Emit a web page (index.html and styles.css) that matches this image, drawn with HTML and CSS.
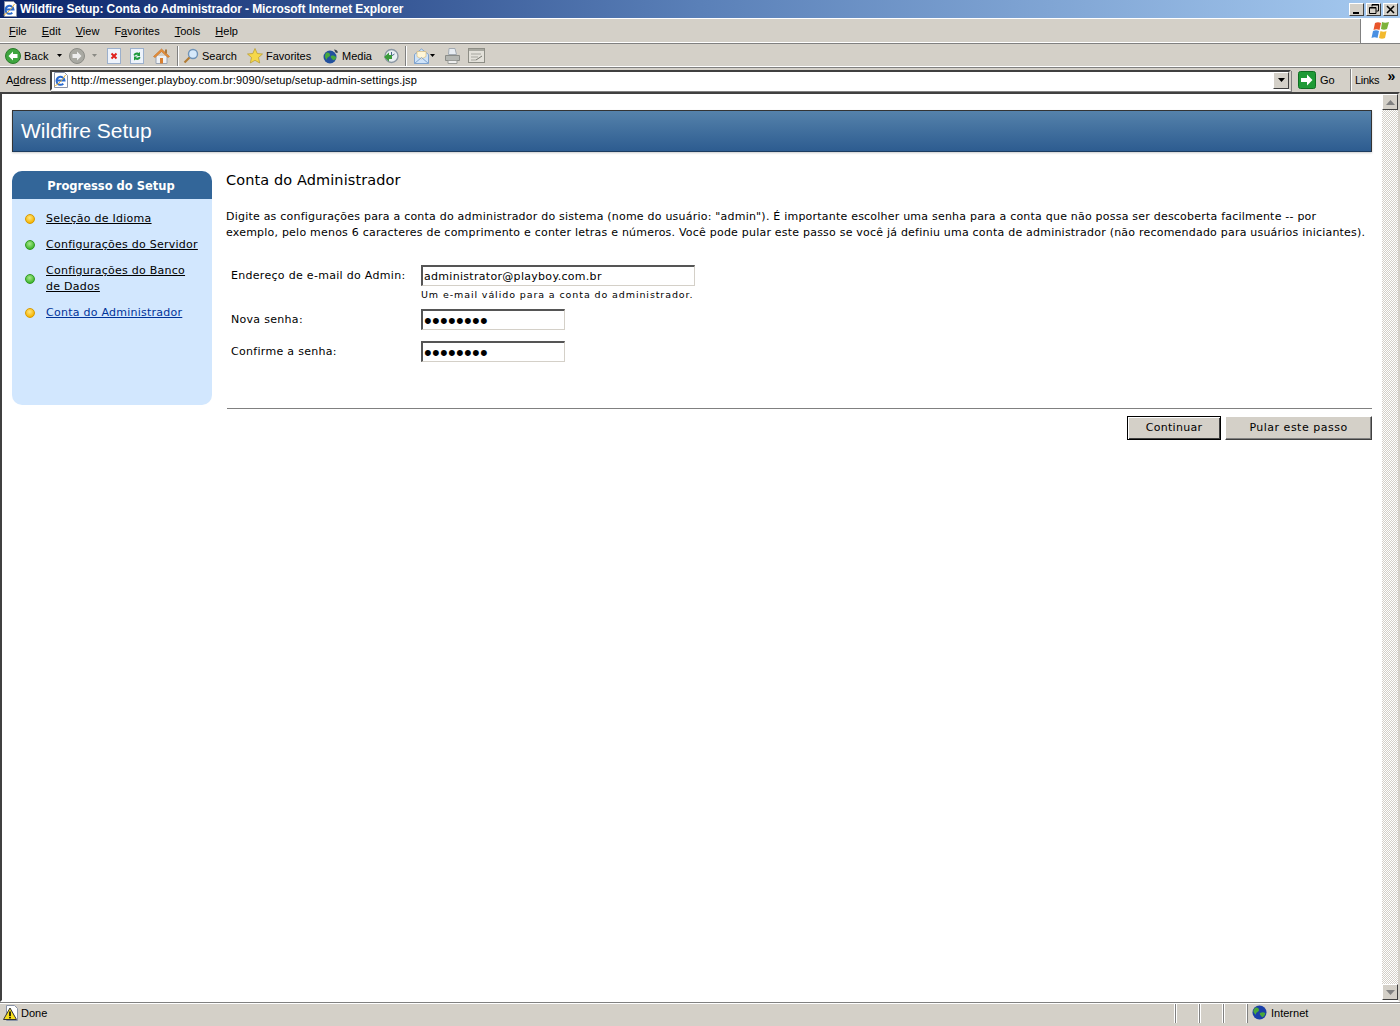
FILE: index.html
```html
<!DOCTYPE html>
<html lang="pt">
<head>
<meta charset="utf-8">
<title>Wildfire Setup: Conta do Administrador - Microsoft Internet Explorer</title>
<link rel="stylesheet" href="styles.css">
</head>
<body>
<div class="window">
  <div class="titlebar">
    <svg class="title-icon" width="16" height="16" viewBox="0 0 16 16"><path d="M2.500.5h9l3 3v12h-12z" fill="#fff" stroke="#8a93a8"/><path d="M4 8.500h7.500a4 4 0 1 0-1.200 3.200" fill="none" stroke="#2a6bd0" stroke-width="2"/><path d="M1.500 14c3-1 8-6 11-11" stroke="#e8b030" fill="none"/></svg>
    <span class="title-text">Wildfire Setup: Conta do Administrador - Microsoft Internet Explorer</span>
    <div class="win-buttons">
      <span class="win-btn"><svg width="9" height="9" viewBox="0 0 9 9"><rect x="1" y="7" width="6" height="2" fill="#000"/></svg></span>
      <span class="win-btn"><svg width="10" height="10" viewBox="0 0 10 10"><path d="M3 .5h6.500v6.500H7.500M3 .5V2.500M.5 3.500h6.500V9.500H.5z" fill="none" stroke="#000"/><path d="M3 1h7M1 4h6" stroke="#000"/></svg></span>
      <span class="win-btn"><svg width="9" height="9" viewBox="0 0 9 9"><path d="M1 1l7 7M8 1L1 8" stroke="#000" stroke-width="1.600"/></svg></span>
    </div>
  </div>

  <div class="menubar">
    <nav class="menu">
      <span><u>F</u>ile</span><span><u>E</u>dit</span><span><u>V</u>iew</span><span>F<u>a</u>vorites</span><span><u>T</u>ools</span><span><u>H</u>elp</span>
    </nav>
    <div class="logo-box">
      <svg width="22" height="19" viewBox="0 0 22 19">
        <path d="M5 2c2-1 4-1 6 0l-1.500 7c-2-1-4-1-6 0z" fill="#e8552a"/>
        <path d="M12 1c2 1 4 1 7 0l-2 7c-2 1-4 1-6 0z" fill="#7db33a"/>
        <path d="M3 10c2-1 4-1 6 0l-1.500 7c-2-1-4-1-6 0z" fill="#4a90e2"/>
        <path d="M10.500 10c2 1 4 1 6 0L15 17c-2 1-4 1-6 0z" fill="#f2b92e"/>
      </svg>
    </div>
  </div>

  <div class="toolbar">
    <span class="tool back-tool">
      <svg width="16" height="16" viewBox="0 0 16 16"><circle cx="8" cy="8" r="7.500" fill="#3ea53e" stroke="#2b7a2b"/><path d="M8 3.500L3.500 8 8 12.500V10h4.500V6H8z" fill="#fff"/></svg>
      <span>Back</span>
      <svg class="caret" width="5" height="3" viewBox="0 0 5 3"><path d="M0 0h5L2.500 3z" fill="#000"/></svg>
    </span>
    <span class="tool forward-tool">
      <svg width="16" height="16" viewBox="0 0 16 16"><circle cx="8" cy="8" r="7.500" fill="#a9a9a2" stroke="#8c8c86"/><path d="M8 3.500L12.500 8 8 12.500V10H3.500V6H8z" fill="#eee"/></svg>
      <svg class="caret" width="5" height="3" viewBox="0 0 5 3"><path d="M0 0h5L2.500 3z" fill="#8a8a84"/></svg>
    </span>
    <span class="tool doc-tool">
      <svg width="14" height="16" viewBox="0 0 14 16"><rect x=".5" y=".5" width="13" height="15" fill="#eef3fb" stroke="#9cb0cc"/><path d="M4.500 5.500l5 5M9.500 5.500l-5 5" stroke="#e0201c" stroke-width="2"/></svg>
    </span>
    <span class="tool doc-tool">
      <svg width="14" height="16" viewBox="0 0 14 16"><rect x=".5" y=".5" width="13" height="15" fill="#eef3fb" stroke="#9cb0cc"/><path d="M3.500 7c.5-2 3-3 5-2l1.500-1v4H6.500L8 7c-1.500-.5-3 0-3 1zM10.500 9.500c-.5 2-3 3-5 2L4 12.500V8.500h3.500L6 9.500c1.500.5 3 0 3-1z" fill="#1f9a3c"/></svg>
    </span>
    <span class="tool home-tool">
      <svg width="17" height="16" viewBox="0 0 17 16"><path d="M3 8v7.500h11V8" fill="#eef1f6" stroke="#9aa4b4"/><path d="M.5 8.500L8.500 1l8 7.500-1.500 1-6.500-6-6.500 6z" fill="#e8903a" stroke="#c06a20" stroke-width=".6"/><rect x="7" y="10" width="3" height="5.500" fill="#d87f30"/><rect x="12" y="1.500" width="2" height="4" fill="#a9783f"/></svg>
    </span>
    <span class="tool-sep"></span>
    <span class="tool search-tool">
      <svg width="16" height="16" viewBox="0 0 16 16"><circle cx="10" cy="6" r="4.500" fill="#d6e9fb" stroke="#6f93b8" stroke-width="1.400"/><path d="M6.500 9.500L1.500 14.500" stroke="#b27b33" stroke-width="2.200"/></svg>
      <span>Search</span>
    </span>
    <span class="tool fav-tool">
      <svg width="16" height="16" viewBox="0 0 16 16"><path d="M8 .5l2.200 5 5.300.5-4 3.500 1.200 5.500L8 12.300 3.300 15l1.200-5.500-4-3.500 5.300-.5z" fill="#f6d84a" stroke="#b89a2a" stroke-width=".7"/></svg>
      <span>Favorites</span>
    </span>
    <span class="tool media-tool">
      <svg width="16" height="16" viewBox="0 0 16 16"><circle cx="7" cy="9" r="6.500" fill="#22509e"/><path d="M3 5c2-1 4 0 4 2s-3 2-3 4-2-1-2-2 0-3 1-4zM8 8c2-1 4 0 5 1s-2 4-3 3-3-3-2-4z" fill="#46a83e"/><path d="M11 1.500c2 0 3.500 1 4 3l-2 .5-1-1.500z" fill="#39424f"/></svg>
      <span>Media</span>
    </span>
    <span class="tool history-tool">
      <svg width="16" height="16" viewBox="0 0 16 16"><circle cx="8.500" cy="8" r="6.500" fill="#e9eef2" stroke="#8b97a3" stroke-width="1.400"/><path d="M8.500 4v4l3-2" stroke="#4c6a8a" fill="none"/><path d="M6 4.500L1 9l5 4.500V11h3V7H6z" fill="#3a9a3a"/></svg>
    </span>
    <span class="tool-sep second"></span>
    <span class="tool mail-tool">
      <svg width="15" height="16" viewBox="0 0 15 16"><path d="M.5 6.500L7.500 1l7 5.500v9H.5z" fill="#cfe3f9" stroke="#7fa3cf"/><path d="M3 3.500h9v5L7.500 11 3 8.500z" fill="#fff6d8" stroke="#d9b66a" stroke-width=".6"/><path d="M.5 15.500l7-6 7 6" fill="none" stroke="#7fa3cf"/></svg>
      <svg class="caret" width="5" height="3" viewBox="0 0 5 3"><path d="M0 0h5L2.500 3z" fill="#000"/></svg>
    </span>
    <span class="tool print-tool">
      <svg width="15" height="16" viewBox="0 0 15 16"><path d="M4 .5h6l1.500 6h-8z" fill="#e8edf3" stroke="#a3aab2"/><path d="M.5 7.500h14v5H.5z" fill="#b4b6b2" stroke="#8a8c88"/><path d="M3 12.500h9v3H3z" fill="#eee" stroke="#9a9c98"/></svg>
    </span>
    <span class="tool edit-tool">
      <svg width="17" height="15" viewBox="0 0 17 15"><rect x=".5" y=".5" width="16" height="14" fill="#e3e1da" stroke="#8e8e86"/><rect x="1" y="1" width="15" height="2" fill="#a8a8a0"/><path d="M3 6h10M3 9h7M3 12h5" stroke="#a5a59e"/><path d="M8 12l6-4" stroke="#77776f"/></svg>
    </span>
  </div>

  <div class="addressbar">
    <span class="addr-label">A<u>d</u>dress</span>
    <div class="addr-field">
      <svg width="16" height="16" viewBox="0 0 16 16"><path d="M1.500.5h10l3 3v12h-13z" fill="#fff" stroke="#8a93a8"/><path d="M4 8.500h7.500a4 4 0 1 0-1.200 3.200" fill="none" stroke="#2a6bd0" stroke-width="2"/><path d="M1.500 14c3-1 8-6 11-11" stroke="#e8b030" fill="none"/></svg>
      <span class="addr-url">http://messenger.playboy.com.br:9090/setup/setup-admin-settings.jsp</span>
      <span class="addr-drop"><svg width="7" height="4" viewBox="0 0 7 4"><path d="M0 0h7L3.500 4z" fill="#000"/></svg></span>
    </div>
    <span class="go">
      <svg width="18" height="18" viewBox="0 0 18 18"><rect x=".5" y=".5" width="17" height="17" rx="2" fill="#1e9a36" stroke="#0f6e22"/><path d="M9 3.500L14.500 9 9 14.500V11H3V7h6z" fill="#fff"/></svg>
      <span>Go</span>
    </span>
    <span class="links">Links<span class="chev">»</span></span>
  </div>

  <div class="viewport">
    <main class="page">
      <header class="banner">Wildfire Setup</header>
      <div class="columns">
        <aside class="sidebar">
          <h2 class="side-title">Progresso do Setup</h2>
          <ul class="steps">
            <li class="step"><i class="dot amber"></i><a href="#">Seleção de Idioma</a></li>
            <li class="step"><i class="dot green"></i><a href="#">Configurações do Servidor</a></li>
            <li class="step"><i class="dot green"></i><a href="#">Configurações do Banco de Dados</a></li>
            <li class="step"><i class="dot amber"></i><a href="#" class="current">Conta do Administrador</a></li>
          </ul>
        </aside>
        <section class="content">
          <h1 class="heading">Conta do Administrador</h1>
          <p class="intro">Digite as configurações para a conta do administrador do sistema (nome do usuário: "admin"). É importante escolher uma senha para a conta que não possa ser descoberta facilmente -- por exemplo, pelo menos 6 caracteres de comprimento e conter letras e números. Você pode pular este passo se você já definiu uma conta de administrador (não recomendado para usuários iniciantes).</p>
          <form class="form">
            <div class="row email-row">
              <label class="label" for="email">Endereço de e-mail do Admin:</label>
              <div class="control">
                <input class="input wide" id="email" type="text" value="administrator@playboy.com.br">
                <div class="hint">Um e-mail válido para a conta do administrador.</div>
              </div>
            </div>
            <div class="row">
              <label class="label" for="p1">Nova senha:</label>
              <input class="input pass" id="p1" type="password" value="12345678">
            </div>
            <div class="row">
              <label class="label" for="p2">Confirme a senha:</label>
              <input class="input pass" id="p2" type="password" value="12345678">
            </div>
            <div class="actions">
              <button class="btn default" type="button">Continuar</button>
              <button class="btn skip" type="button">Pular este passo</button>
            </div>
          </form>
        </section>
      </div>
    </main>
    <div class="scrollbar">
      <span class="sb-btn"><svg width="9" height="5" viewBox="0 0 9 5"><path d="M4.500 0L9 5H0z" fill="#808080"/></svg></span>
      <span class="sb-track"></span>
      <span class="sb-btn"><svg width="9" height="5" viewBox="0 0 9 5"><path d="M0 0h9L4.500 5z" fill="#808080"/></svg></span>
    </div>
  </div>

  <footer class="status">
    <svg class="status-icon" width="16" height="16" viewBox="0 0 16 16"><path d="M3.500.5h8l3 3v12h-11z" fill="#fff" stroke="#8a93a8"/><path d="M7 3L.5 14.500h13z" fill="#f7df1e" stroke="#333"/><rect x="6.200" y="6.500" width="1.600" height="4.500"/><rect x="6.200" y="11.800" width="1.600" height="1.600"/></svg>
    <span class="status-text">Done</span>
    <span class="cell"></span><span class="cell"></span><span class="cell"></span>
    <span class="zone">
      <svg width="15" height="15" viewBox="0 0 15 15"><circle cx="7.500" cy="7.500" r="7" fill="#1a3fa8"/><path d="M3 3c2-1 4 0 4 2S4 7 4 9 2 8 1.500 7s.5-3 1.500-4zM8 8c2-1 4-1 5 0s-2 5-3 4-3-3-2-4z" fill="#4aa83a"/></svg>
      <span>Internet</span>
    </span>
  </footer>
</div>
</body>
</html>
```

FILE: styles.css
```css
* { box-sizing: border-box; }
html, body { margin: 0; height: 100%; overflow: hidden; }
body { font-family: "Liberation Sans", Arial, sans-serif; font-size: 11px; color: #000; background: #d4d0c8; }

.window { height: 1026px; display: flex; flex-direction: column; }

.titlebar { height: 18px; flex: none; display: flex; align-items: center; padding-left: 2px; background: linear-gradient(to right, #0a246a, #5a80b8 50%, #a6caf0); }
.title-icon { flex: none; }
.title-text { margin-left: 2px; color: #fff; font-weight: bold; font-size: 12px; letter-spacing: -.08px; white-space: nowrap; }
.win-buttons { margin-left: auto; display: flex; gap: 2px; padding-right: 2px; }
.win-btn { width: 15px; height: 13px; background: #d4d0c8; border: 1px solid; border-color: #fff #404040 #404040 #fff; display: flex; align-items: center; justify-content: center; }

.menubar { height: 26px; flex: none; display: flex; border-top: 1px solid #fff; border-bottom: 1px solid #808080; box-shadow: inset 0 -1px 0 #fff; }
.menu { display: flex; flex: 1; align-items: center; padding-left: 9px; gap: 15px; font-size: 11px; }
.logo-box { width: 40px; background: #fff; border-left: 1px solid #808080; display: flex; align-items: center; justify-content: center; margin-left: auto; padding-bottom: 2px; }

.toolbar { height: 24px; flex: none; display: flex; align-items: center; padding-left: 5px; border-bottom: 1px solid #808080; box-shadow: inset 0 -1px 0 #fff; font-size: 11px; }
.tool { display: flex; align-items: center; flex: none; }
.caret { margin-left: 5px; }
.back-tool { width: 64px; gap: 3px; }
.back-tool .caret { margin-left: 6px; }
.forward-tool { width: 38px; gap: 0; }
.forward-tool .caret { margin-left: 7px; }
.doc-tool { width: 23px; }
.home-tool { width: 24px; }
.tool-sep { width: 1px; height: 20px; background: #808080; box-shadow: 1px 0 0 #fff; margin: 0 5px 0 0; flex: none; }
.tool-sep.second { margin: 0 8px 0 0; }
.search-tool { width: 64px; gap: 3px; }
.fav-tool { width: 76px; gap: 3px; }
.media-tool { width: 60px; gap: 3px; }
.history-tool { width: 22px; }
.mail-tool { width: 31px; }
.mail-tool .caret { margin-left: 1px; }
.print-tool { width: 23px; }
.edit-tool { width: 20px; }

.addressbar { height: 24px; flex: none; display: flex; align-items: center; padding-left: 6px; font-size: 11px; }
.addr-label { width: 44px; flex: none; }
.addr-field { width: 1241px; height: 21px; flex: none; display: flex; align-items: center; background: #fff; border: 2px solid; border-color: #404040 #d4d0c8 #fff #404040; box-shadow: 1px 1px 0 #808080; padding-left: 1px; }
.addr-url { margin-left: 2px; font-size: 11px; letter-spacing: .12px; white-space: nowrap; }
.addr-drop { margin-left: auto; width: 16px; height: 17px; background: #d4d0c8; border: 1px solid; border-color: #fff #404040 #404040 #fff; display: flex; align-items: center; justify-content: center; }
.go { display: flex; align-items: center; gap: 4px; margin-left: 7px; width: 52px; flex: none; }
.links { border-left: 1px solid #808080; box-shadow: inset 1px 0 0 #fff; height: 22px; display: flex; align-items: center; padding-left: 4px; flex: 1; position: relative; letter-spacing: -.3px; }
.chev { position: absolute; right: 5px; top: -1px; font-size: 14px; font-weight: bold; }

.viewport { flex: 1; display: flex; min-height: 0; background: #fff; border: 2px solid; border-color: #404040 #d4d0c8 #fff #404040; }
.page { flex: 1; padding: 16px 10px 0; min-width: 0; font-family: "DejaVu Sans", Verdana, sans-serif; font-size: 11px; line-height: 16px; }

.banner { height: 42px; padding-left: 8px; color: #fff; font: 21px/40px "Liberation Sans", Arial, sans-serif; background: linear-gradient(to bottom, #5582ab, #2d5c90); border: 1px solid #333; border-bottom-color: #1c3c60; box-shadow: 0 1px 2px #ccc; }

.columns { display: flex; gap: 14px; margin-top: 19px; }
.sidebar { width: 200px; height: 234px; flex: none; background: #d2e7fe; border-radius: 10px; overflow: hidden; }
.side-title { margin: 0; height: 28px; text-align: center; padding: 1px 2px 0 0; color: #fff; font: bold 11.500px/28px "DejaVu Sans", Verdana, sans-serif; background: #336699; }
.steps { list-style: none; margin: 0; padding: 12px 12px 0 13px; }
.step { display: flex; align-items: center; gap: 11px; margin-bottom: 10px; letter-spacing: .25px; }
.step a { color: #000; flex: 1; }
.step a.current { color: #003399; }
.dot { width: 10px; height: 10px; border-radius: 50%; flex: none; }
.dot.amber { background: radial-gradient(circle at 45% 35%, #ffe680, #f5b400 75%); border: 1px solid #d99a00; }
.dot.green { background: radial-gradient(circle at 45% 35%, #a6e88c, #3fb52c 75%); border: 1px solid #2f9a20; }

.content { flex: 1; min-width: 0; }
.heading { margin: 0; font: 14.500px/18px "DejaVu Sans", Verdana, sans-serif; letter-spacing: .1px; }
.intro { margin: 20px 0 0; letter-spacing: .215px; max-width: 1143px; }
.form { margin: 24px 0 0; }
.row { display: flex; align-items: flex-start; margin-bottom: 11px; }
.email-row { margin-bottom: 7px; }
.label { width: 190px; margin-left: 5px; flex: none; padding-top: 3px; letter-spacing: .3px; }
.input { display: block; height: 21px; padding: 0 1px; margin: 0; background: #fff; border: 1px solid #d4d0c8; border-top: 2px solid #555; border-left: 2px solid #555; outline: none; border-radius: 0; font: 11px "DejaVu Sans", Verdana, sans-serif; letter-spacing: .3px; color: #000; }
.input.wide { width: 274px; }
.input.pass { width: 144px; padding-top: 1px; font-family: "Liberation Sans", sans-serif; font-size: 22px; letter-spacing: .3px; }
.hint { font-size: 9.500px; line-height: 14px; margin-top: 2px; letter-spacing: .9px; white-space: nowrap; }
.actions { margin-top: 46px; padding-top: 7px; border-top: 1px solid #808080; display: flex; justify-content: flex-end; gap: 4px; margin-left: 1px; }
.btn { height: 24px; padding: 0 0 2px; background: #d4d0c8; font: 11px "DejaVu Sans", Verdana, sans-serif; letter-spacing: .3px; color: #000; border: 1px solid; border-color: #fff #404040 #404040 #fff; border-radius: 0; }
.btn.default { width: 94px; border-color: #000; box-shadow: inset 1px 1px 0 #fff, inset -1px -1px 0 #404040; }
.btn.skip { width: 147px; letter-spacing: .5px; box-shadow: inset -1px -1px 0 #808080; }

.scrollbar { width: 16px; flex: none; display: flex; flex-direction: column; background: repeating-conic-gradient(#d4d0c8 0 25%, #fff 0 50%) 0 0 / 2px 2px; }
.sb-btn { height: 16px; flex: none; background: #d4d0c8; border: 1px solid; border-color: #fff #404040 #404040 #fff; display: flex; align-items: center; justify-content: center; }
.sb-track { flex: 1; }

.status { height: 24px; flex: none; display: flex; align-items: flex-start; padding: 2px 0 0 3px; border-top: 1px solid #808080; box-shadow: inset 0 1px 0 #fff; font-size: 11px; }
.status-icon { flex: none; }
.status-text { margin-left: 2px; flex: 1; line-height: 16px; }
.cell { width: 24px; height: 19px; margin-top: -1px; flex: none; border-left: 1px solid #808080; box-shadow: inset 1px 0 0 #fff, -1px 0 0 #fff; }
.zone { width: 153px; height: 19px; margin-top: -1px; flex: none; display: flex; align-items: flex-start; gap: 4px; padding: 1px 0 0 4px; line-height: 16px; border-left: 1px solid #808080; box-shadow: -1px 0 0 #fff; }
```
